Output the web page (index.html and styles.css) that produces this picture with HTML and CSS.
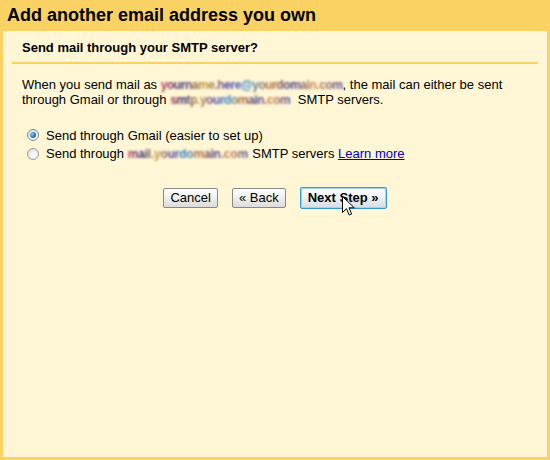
FILE: index.html
```html
<!DOCTYPE html>
<html>
<head>
<meta charset="utf-8">
<link rel="stylesheet" href="styles.css">
</head>
<body>
<div class="frame">
  <h1 class="title">Add another email address you own</h1>
  <div class="panel">
    <div class="section">
      <h2 class="subhead">Send mail through your SMTP server?</h2>
      <p class="intro">When you send mail as <span class="blur blur-a"><span class="blur-text">yourname.here@yourdomain.com</span></span>, the mail can either be sent<br>through Gmail or through <span class="blur blur-b"><span class="blur-text">smtp.yourdomain.com</span></span> SMTP servers.</p>
      <div class="options">
        <label class="option"><span class="radio checked"></span>Send through Gmail (easier to set up)</label>
        <label class="option"><span class="radio"></span>Send through <span class="blur blur-c"><span class="blur-text">mail.yourdomain.com</span></span> SMTP servers <a class="link" href="#">Learn more</a></label>
      </div>
      <div class="buttons">
        <button class="btn">Cancel</button>
        <button class="btn">« Back</button>
        <button class="btn btn-primary">Next Step »</button>
        <svg class="cursor" width="13" height="21" viewBox="0 0 13 21"><path d="M0.5 0.5 L0.5 16.5 L4.5 12.7 L7.2 19 L9.6 18 L7 11.8 L12.3 11.8 Z" fill="#fff" stroke="#000" stroke-width="1" stroke-linejoin="miter"/></svg>
      </div>
    </div>
  </div>
</div>
</body>
</html>
```

FILE: styles.css
```css
html, body {
  margin: 0;
  padding: 0;
}
body {
  width: 550px;
  height: 460px;
  font-family: "Liberation Sans", Arial, sans-serif;
  color: #000;
}
.frame {
  box-sizing: border-box;
  width: 550px;
  height: 460px;
  background: #fad163;
  padding: 0 3px 3px 3px;
  display: flex;
  flex-direction: column;
}
.title {
  margin: 0;
  height: 31px;
  line-height: 31px;
  font-size: 18px;
  font-weight: bold;
  padding-left: 4px;
}
.panel {
  flex: 1;
  background: #fff6d6;
}
.section {
  margin: 0 9px;
}
.subhead {
  margin: 0;
  font-size: 13px;
  font-weight: bold;
  line-height: 16px;
  padding: 9px 0 6px 10px;
  border-bottom: 2px solid #fad163;
}
.intro {
  margin: 13px 0 0 10px;
  font-size: 13px;
  line-height: 15px;
}
.blur {
  display: inline-block;
  vertical-align: bottom;
  white-space: nowrap;
  height: 15px;
  line-height: 15px;
  filter: blur(0.9px);
}
.blur-text {
  font-size: 12px;
  font-weight: bold;
  letter-spacing: -0.45px;
  background: linear-gradient(90deg, #c03a50, #2a2a7a 12%, #c89a30 24%, #5a3a9a 36%, #2a8ad0 48%, #b86a30 60%, #3a3a8a 72%, #d08a40 84%, #4a4a9a);
  -webkit-background-clip: text;
  background-clip: text;
  color: transparent;
}
.blur-a { min-width: 180px; }
.blur-b { min-width: 124px; }
.blur-c { min-width: 121px; }
.blur-c .blur-text { letter-spacing: -0.2px; }
.options {
  margin: 19px 0 0 15px;
  font-size: 13px;
}
.option {
  display: flex;
  align-items: center;
  height: 18.5px;
  white-space: pre;
}
.radio {
  box-sizing: border-box;
  width: 12px;
  height: 12px;
  border-radius: 50%;
  border: 1px solid #9a9a9a;
  background: radial-gradient(circle at 60% 65%, #ffffff 0%, #f2f2f2 40%, #d8d8d8 100%);
  margin: 0 7px 0 0;
  display: flex;
  align-items: center;
  justify-content: center;
  flex: none;
}
.radio.checked {
  border-color: #7a8a9a;
}
.radio.checked::after {
  content: "";
  width: 6px;
  height: 6px;
  border-radius: 50%;
  background: radial-gradient(circle at 35% 35%, #8ad0f0 0%, #2a7ab8 55%, #1a4a80 100%);
}
.link {
  color: #0000cc;
  text-decoration: underline;
}
.buttons {
  position: relative;
  display: flex;
  justify-content: center;
  align-items: center;
  gap: 14px;
  margin-top: 24px;
}
.btn {
  box-sizing: border-box;
  height: 20px;
  padding: 0 6px;
  font-family: "Liberation Sans", Arial, sans-serif;
  font-size: 13px;
  color: #000;
  border: 1px solid #888;
  border-radius: 2px;
  background: linear-gradient(#ffffff, #f0f0f0 45%, #dcdcdc);
  line-height: 18px;
}
.btn-primary {
  height: 22px;
  font-weight: bold;
  padding: 0 7px;
  border: 1px solid #3a9ad8;
  box-shadow: inset 0 0 0 1px #9fd4f4;
  background: linear-gradient(#ffffff, #eef4f8 45%, #d6dde2);
}
.cursor {
  position: absolute;
  left: 330px;
  top: 9px;
}
```
